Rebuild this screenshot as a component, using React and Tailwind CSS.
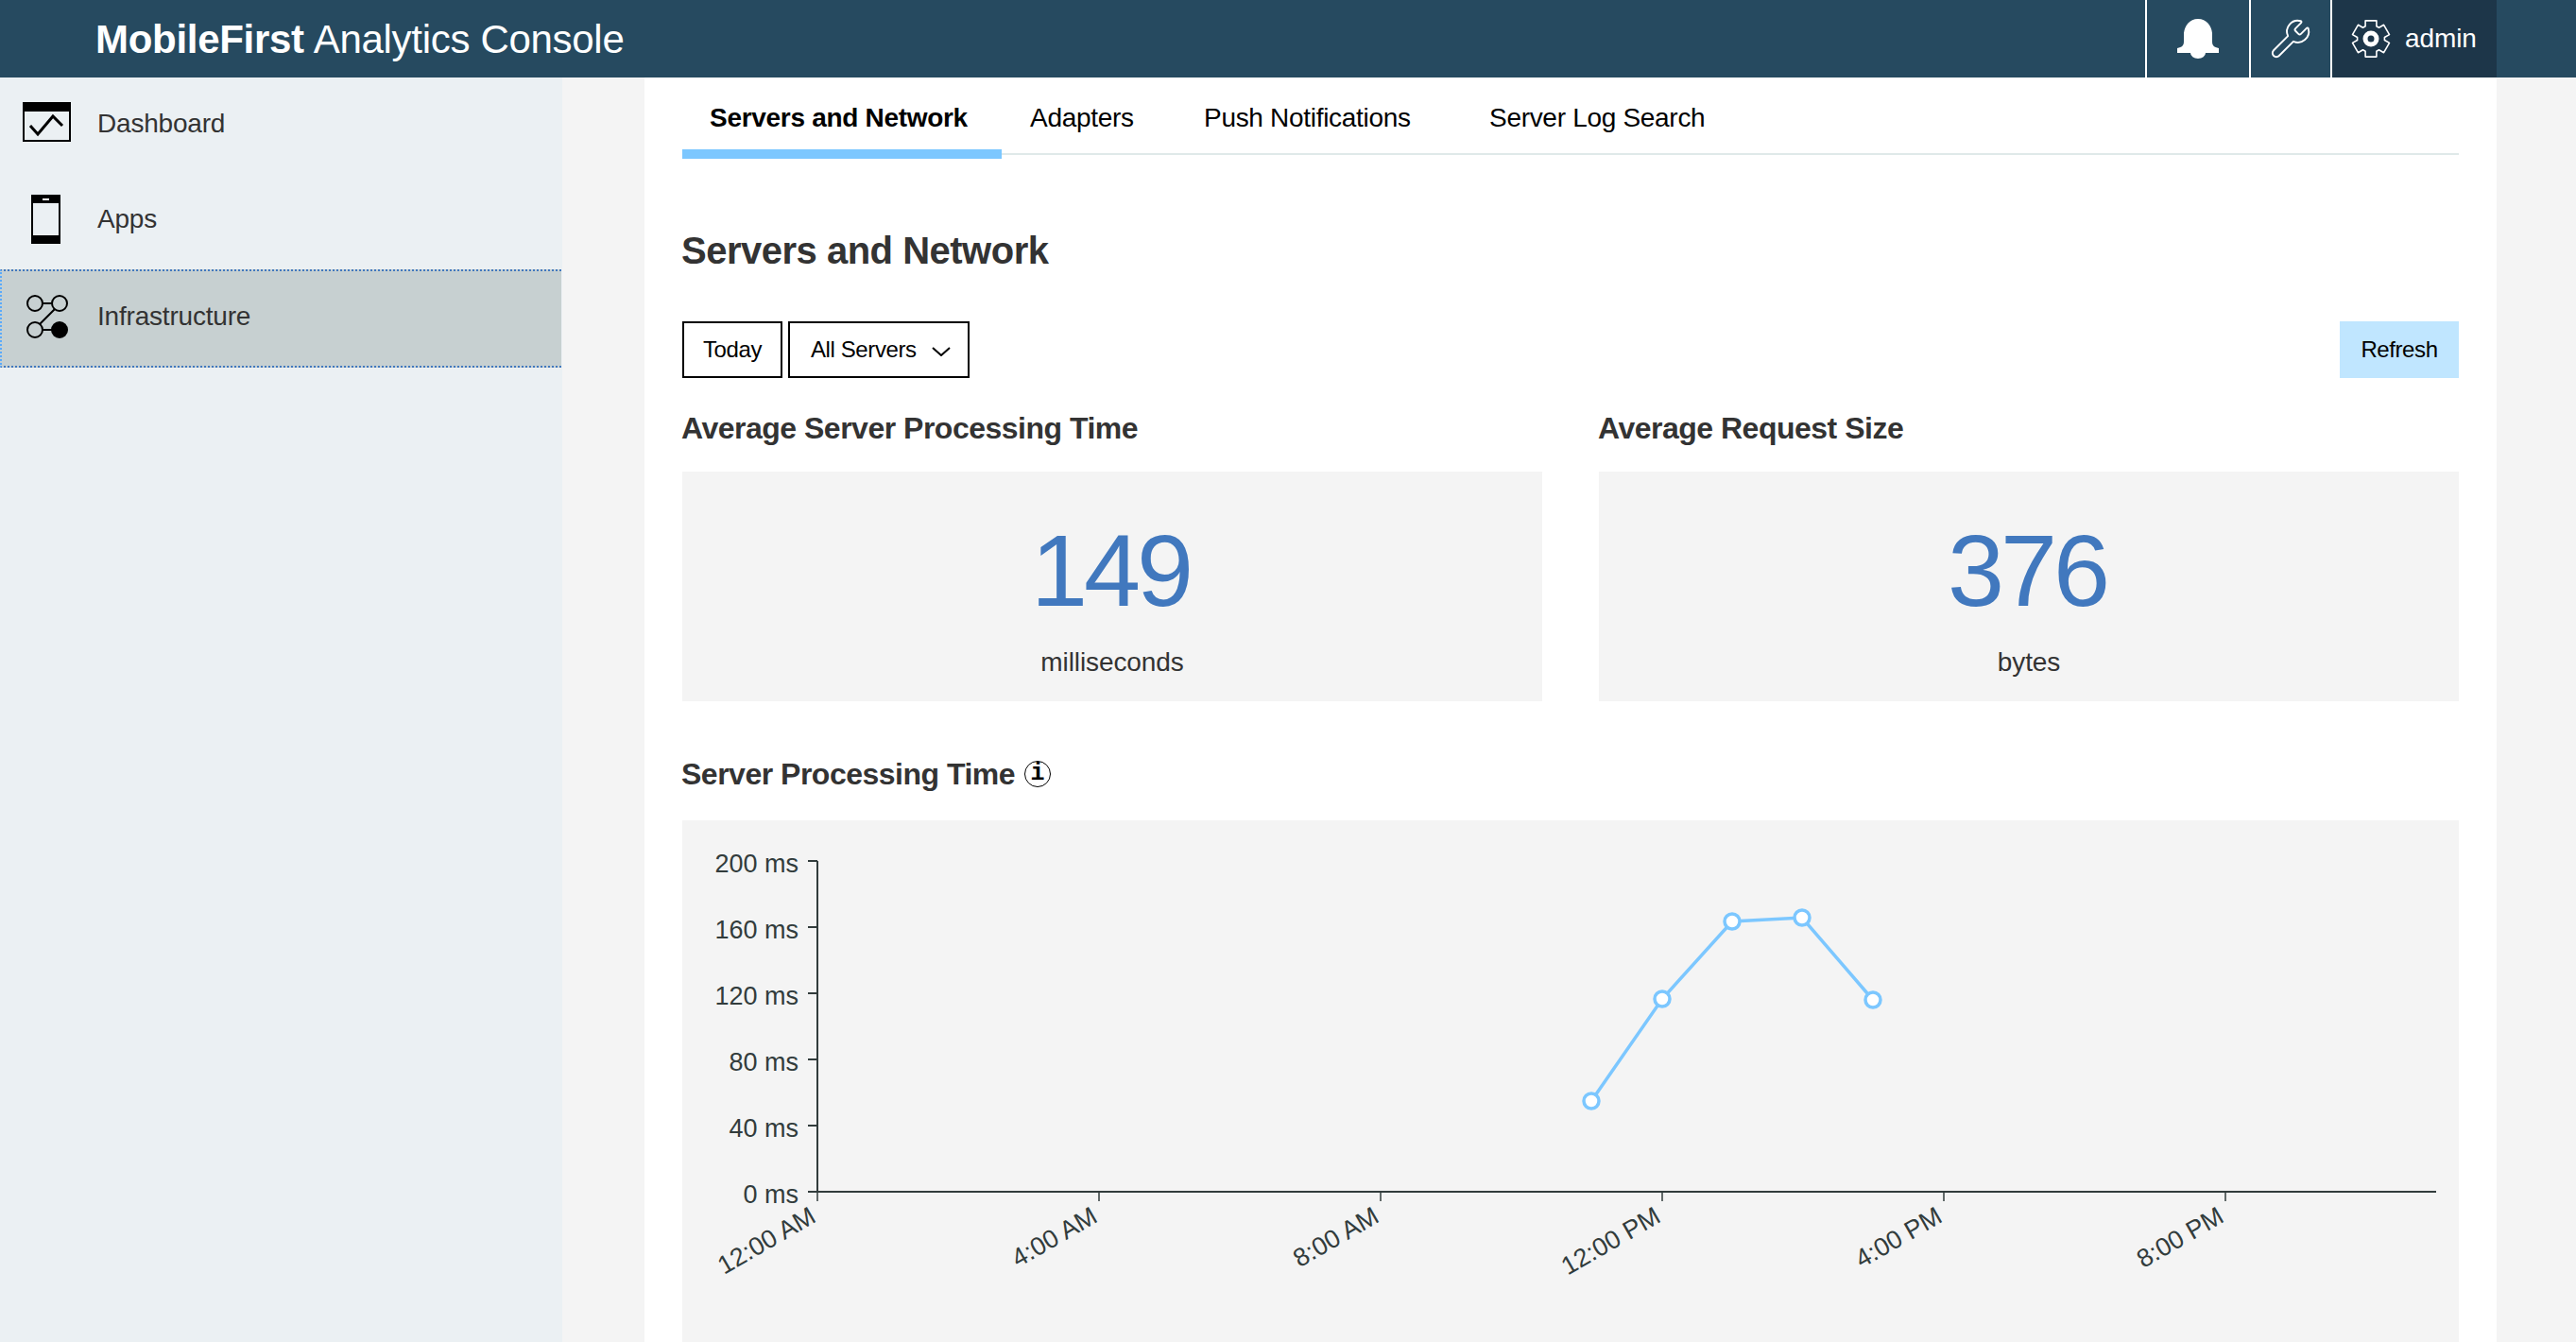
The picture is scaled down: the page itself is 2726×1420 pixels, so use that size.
import React from "react";
import clsx from "clsx";
import { Wrench } from "lucide-react";

const SANS = "font-['Liberation_Sans',Arial,sans-serif]";

const NAV = [
  { label: "Dashboard", icon: DashboardIcon, cls: "h-[96px] pt-[1px]" },
  { label: "Apps", icon: PhoneIcon, cls: "h-[107px]" },
  {
    label: "Infrastructure",
    icon: InfraIcon,
    cls: "h-[104px] pb-[5px] bg-[#c7d0d1] border-y-2 border-dotted border-y-[#4178be] border-l-2 border-l-[#5aaafa] w-[594px]",
  },
];

const TABS = [
  { label: "Servers and Network", cls: "w-[338px] pl-[29px] font-bold border-b-[10px] border-[#7cc7ff] h-[86px]" },
  { label: "Adapters", cls: "w-[214px] pl-[30px]" },
  { label: "Push Notifications", cls: "w-[302px]" },
  { label: "Server Log Search", cls: "w-[240px]" },
];

const Y_TICKS = [
  { y: 911, label: "200 ms" },
  { y: 981, label: "160 ms" },
  { y: 1051, label: "120 ms" },
  { y: 1121, label: "80 ms" },
  { y: 1191, label: "40 ms" },
  { y: 1261, label: "0 ms" },
];

const X_TICKS = [
  { x: 865, label: "12:00 AM" },
  { x: 1163, label: "4:00 AM" },
  { x: 1461, label: "8:00 AM" },
  { x: 1759, label: "12:00 PM" },
  { x: 2057, label: "4:00 PM" },
  { x: 2355, label: "8:00 PM" },
];

const POINTS = [
  [1684, 1165],
  [1759, 1057],
  [1833, 975],
  [1907, 971],
  [1982, 1058],
];

function DashboardIcon() {
  return (
    <svg width="51" height="42" viewBox="0 0 51 42" className="ml-[24px] mr-[28px] -mt-[3px]">
      <rect x="1" y="1" width="49" height="40" fill="none" stroke="#000" strokeWidth="2" />
      <rect x="0" y="0" width="51" height="10" fill="#000" />
      <path d="M8 25l8 9 16-19 10 10" fill="none" stroke="#000" strokeWidth="3" />
    </svg>
  );
}

function PhoneIcon() {
  return (
    <svg width="31" height="52" viewBox="0 0 31 52" className="ml-[33px] mr-[39px]">
      <rect x="1" y="1" width="29" height="50" fill="none" stroke="#000" strokeWidth="2" />
      <rect x="0" y="0" width="31" height="9" fill="#000" />
      <rect x="0" y="43" width="31" height="9" fill="#000" />
      <rect x="12" y="4" width="7" height="2" fill="#fff" />
    </svg>
  );
}

function InfraIcon() {
  return (
    <svg width="46" height="46" viewBox="0 0 46 46" className="ml-[25px] mr-[30px]">
      <g fill="none" stroke="#000" strokeWidth="2">
        <circle cx="10" cy="9" r="8" />
        <circle cx="36" cy="9" r="8" />
        <circle cx="10" cy="37" r="8" />
        <path d="M18 9h10M31 15L15 31M18 37h10" />
      </g>
      <circle cx="36" cy="37" r="9" fill="#000" />
    </svg>
  );
}

function BellIcon() {
  return (
    <svg width="44" height="42" viewBox="0 0 44 42" fill="#fff">
      <path d="M22 0C13 0 8 7 7 15V24C7 28 5 30 0 31V36H14A8 6 0 0 0 30 36H44V31C39 30 37 28 37 24V15C36 7 31 0 22 0Z" />
    </svg>
  );
}

function GearIcon() {
  // six teeth, one pointing straight up
  const pts = [];
  for (let i = 0; i < 6; i++) {
    const a = ((i * 60 - 90) * Math.PI) / 180;
    const at = (r, off) => `${(21 + r * Math.cos(a + off)).toFixed(1)},${(21 + r * Math.sin(a + off)).toFixed(1)}`;
    pts.push(at(14.5, -0.42), at(20, -0.3), at(20, 0.3), at(14.5, 0.42));
  }
  return (
    <svg width="42" height="42" viewBox="0 0 42 42" className="shrink-0">
      <polygon points={pts.join(" ")} fill="none" stroke="#fff" strokeWidth="1.6" strokeLinejoin="round" />
      <circle cx="21" cy="21" r="6" fill="none" stroke="#fff" strokeWidth="5" />
    </svg>
  );
}

function StatCard({ title, value, unit }) {
  return (
    <div className="w-[910px]">
      <h3 className="text-[32px] leading-[44px] font-bold text-[#333] tracking-[-0.5px] -ml-[1px]">{title}</h3>
      <div className="mt-[24px] h-[243px] bg-[#f4f4f4] flex flex-col items-center">
        <div className="mt-[39px] text-[108px] leading-[132px] text-[#4178be] tracking-[-4px] pr-[4px]">{value}</div>
        <div className="mt-[15px] text-[28px] leading-[32px] text-[#333] tracking-[-0.1px]">{unit}</div>
      </div>
    </div>
  );
}

function Chart() {
  // coordinates are page pixels, shifted by the panel's origin
  const ox = 722;
  const oy = 868;
  return (
    <svg width="1880" height="552" viewBox={`${ox} ${oy} 1880 552`} className="block">
      <g stroke="#323c3c" strokeWidth="2" fill="none">
        <path d="M865 911V1261H2578" />
        {Y_TICKS.map((t) => (
          <path key={t.y} d={`M855 ${t.y}H865`} />
        ))}
        {X_TICKS.map((t) => (
          <path key={t.x} d={`M${t.x} 1261V1271`} strokeWidth="1.5" />
        ))}
      </g>
      <g fill="#323c3c" fontFamily="'Liberation Sans', Arial, sans-serif" fontSize="27">
        {Y_TICKS.map((t) => (
          <text key={t.y} x="845" y={t.y + 12} textAnchor="end">
            {t.label}
          </text>
        ))}
        {X_TICKS.map((t) => (
          <text key={t.x} x={t.x} y="1292" textAnchor="end" transform={`rotate(-30 ${t.x} 1292)`}>
            {t.label}
          </text>
        ))}
      </g>
      <polyline points={POINTS.map((p) => p.join(",")).join(" ")} fill="none" stroke="#7cc7ff" strokeWidth="3.5" />
      {POINTS.map(([x, y]) => (
        <circle key={x} cx={x} cy={y} r="8" fill="#fff" stroke="#7cc7ff" strokeWidth="3.5" />
      ))}
    </svg>
  );
}

export default function App() {
  return (
    <div className={clsx("h-[1420px] w-[2726px] overflow-hidden flex flex-col bg-[#f4f4f4] text-[#333]", SANS)}>
      <header className="h-[82px] shrink-0 bg-[#264a60] flex items-stretch text-white">
        <div className="flex-1 pl-[101px] flex items-center text-[42px] tracking-[-0.3px]">
          <span className="font-bold">MobileFirst</span>
          <span className="ml-[10px]">Analytics Console</span>
        </div>
        <div className="w-[110px] border-l-2 border-white flex items-center justify-center">
          <BellIcon />
        </div>
        <div className="w-[86px] border-l-2 border-white flex items-center justify-center">
          <Wrench size={46} strokeWidth={1} color="#fff" />
        </div>
        <div className="w-[176px] border-l-2 border-white bg-[#1d3649] flex items-center pl-[20px] gap-[15px] text-[28px] tracking-[-0.1px]">
          <GearIcon />
          <span>admin</span>
        </div>
        <div className="w-[84px]" />
      </header>

      <div className="flex-1 min-h-0 flex">
        <aside className="w-[595px] shrink-0 bg-[#ebf0f3]">
          {NAV.map((n) => (
            <div key={n.label} className={clsx("flex items-center text-[28px] tracking-[-0.2px]", n.cls)}>
              <n.icon />
              <span>{n.label}</span>
            </div>
          ))}
        </aside>

        <main className="ml-[87px] w-[1960px] bg-white px-[40px] flex flex-col">
          <div className="h-[82px] -mb-[4px] w-full border-b-2 border-[#dfe9e9] flex items-start text-[28px] text-black tracking-[-0.3px]">
            {TABS.map((t) => (
              <div key={t.label} className={clsx("shrink-0 pt-[22px]", t.cls)}>
                {t.label}
              </div>
            ))}
          </div>

          <h1 className="mt-[81px] -ml-[1px] text-[40px] leading-[48px] font-bold text-[#333] tracking-[-0.5px]">Servers and Network</h1>

          <div className="mt-[51px] flex items-center h-[60px] text-[24px] text-black tracking-[-0.4px]">
            <div className="h-[60px] w-[106px] border-2 border-black flex items-center justify-center">Today</div>
            <div className="ml-[6px] h-[60px] w-[192px] border-2 border-black flex items-center pl-[22px]">
              <span>All Servers</span>
              <svg width="20" height="10" viewBox="0 0 20 10" className="ml-[16px] mt-[3px]" fill="none" stroke="#000" strokeWidth="2">
                <path d="M1 1l9 8 9-8" />
              </svg>
            </div>
            <div className="ml-auto h-[60px] w-[126px] bg-[#c0e6ff] flex items-center justify-center">Refresh</div>
          </div>

          <div className="mt-[31px] flex justify-between">
            <StatCard title="Average Server Processing Time" value="149" unit="milliseconds" />
            <StatCard title="Average Request Size" value="376" unit="bytes" />
          </div>

          <div className="mt-[55px] h-[44px] flex items-center gap-[10px] -ml-[1px]">
            <h3 className="text-[32px] leading-[44px] font-bold text-[#333] tracking-[-0.5px]">Server Processing Time</h3>
            <span className="w-[28px] h-[28px] rounded-full border-[1.5px] border-black flex items-center justify-center text-[25px] font-bold text-black font-['Liberation_Mono',monospace]">
              i
            </span>
          </div>

          <div className="mt-[27px] flex-1 min-h-0 bg-[#f4f4f4]">
            <Chart />
          </div>
        </main>
      </div>
    </div>
  );
}
